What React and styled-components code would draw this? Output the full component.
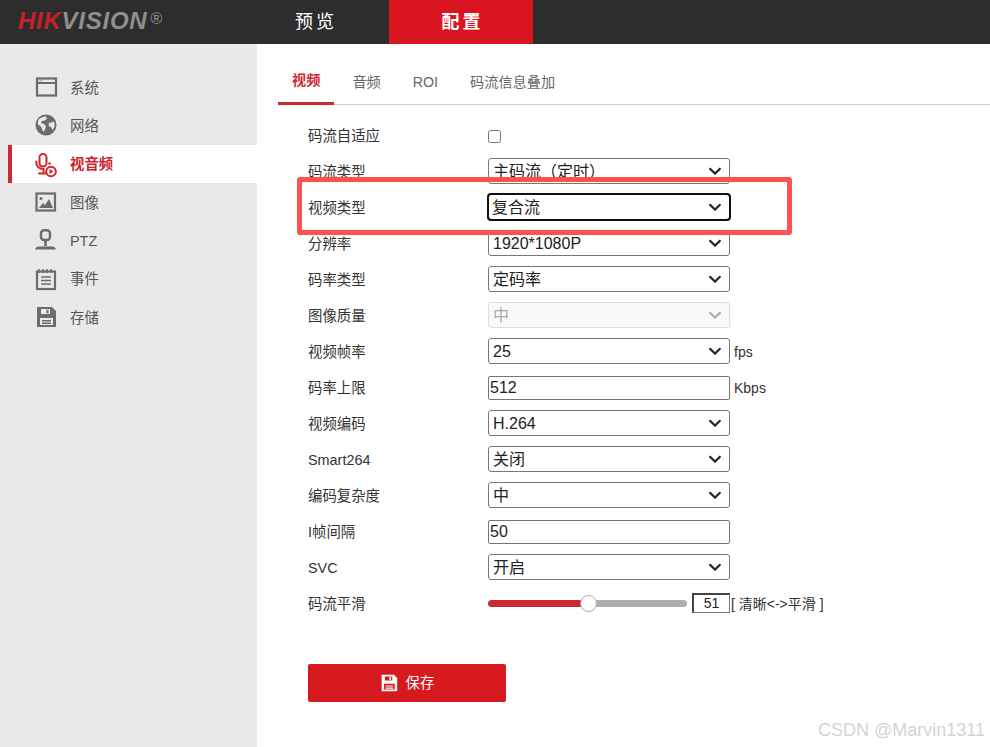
import React from "react";
import styled, { createGlobalStyle } from "styled-components";

const FONT = `"Liberation Sans", "Noto Sans CJK SC", sans-serif`;

const chevron = (color) =>
  `url("data:image/svg+xml,%3Csvg xmlns='http://www.w3.org/2000/svg' width='14' height='8' viewBox='0 0 14 8'%3E%3Cpath d='M1.500 1.200L7 6.500l5.500-5.300' fill='none' stroke='${color}' stroke-width='2.200'/%3E%3C/svg%3E")`;

const isLatin = (s) => /^[\x00-\x7f]+$/.test(s);

const GlobalStyle = createGlobalStyle`
  html, body {
    margin: 0;
    padding: 0;
    background: #fff;
    font-family: ${FONT};
  }
`;

const Page = styled.div`
  position: relative;
  width: 990px;
  height: 747px;
  overflow: hidden;
`;

const Header = styled.header`
  display: flex;
  height: 44px;
  background: #2d2d2d;
`;

const Logo = styled.div`
  display: flex;
  align-items: flex-start;
  width: 243px;
  padding: 6px 0 0 18px;
  box-sizing: border-box;
  font-size: 24px;
  line-height: 30px;
  font-weight: bold;
  font-style: italic;
  letter-spacing: 0.75px;
  color: #8f8f8f;
  span {
    color: #c8202a;
  }
  sup {
    margin: 4px 0 0 3px;
    font-size: 16px;
    line-height: 18px;
    font-style: normal;
    font-weight: normal;
    letter-spacing: 0;
  }
`;

const HeadTab = styled.div`
  display: flex;
  align-items: center;
  justify-content: center;
  width: ${(p) => (p.$active ? "144px" : "146px")};
  padding-left: ${(p) => (p.$active ? "3px" : "0")};
  padding-bottom: 4px;
  box-sizing: border-box;
  font-size: 18px;
  font-weight: ${(p) => (p.$active ? "bold" : "normal")};
  letter-spacing: 3px;
  color: #fff;
  background: ${(p) => (p.$active ? "#d9161f" : "transparent")};
`;

const Body = styled.div`
  display: flex;
  height: 703px;
`;

const Sidebar = styled.nav`
  width: 257px;
  padding-top: 24px;
  box-sizing: border-box;
  background: #e9e9e9;
`;

const NavItem = styled.div`
  display: flex;
  align-items: center;
  gap: 13px;
  height: 38.33px;
  margin-left: 8px;
  padding-left: ${(p) => (p.$active ? "23px" : "27px")};
  border-left: ${(p) => (p.$active ? "4px solid #cc2a33" : "none")};
  background: ${(p) => (p.$active ? "#fff" : "transparent")};
  color: ${(p) => (p.$active ? "#cf222c" : "#555")};
  font-size: 14.4px;
  font-weight: ${(p) => (p.$active ? "bold" : "normal")};
  svg {
    flex: none;
    width: 22px;
    height: 22px;
    overflow: visible;
    color: ${(p) => (p.$active ? "#d0252f" : "#6c6c6c")};
  }
`;

const NavText = styled.span`
  margin-top: ${(p) => (p.$latin ? "1px" : "-2px")};
`;

const Main = styled.main`
  flex: 1;
  padding-top: 16px;
`;

const Tabs = styled.div`
  display: flex;
  gap: 4px;
  height: 44px;
  margin-left: 21px;
  border-bottom: 1px solid #ccc;
`;

const Tab = styled.div`
  padding: ${(p) => (p.$active ? "12px 14px 0" : "14px 14px 0")};
  margin-bottom: ${(p) => (p.$active ? "-1px" : "0")};
  font-size: 14.2px;
  line-height: 16px;
  font-weight: ${(p) => (p.$active ? "bold" : "normal")};
  color: ${(p) => (p.$active ? "#cc2a33" : "#666")};
  border-bottom: ${(p) => (p.$active ? "3px solid #cc2a33" : "none")};
`;

const Form = styled.div`
  padding: 13px 0 0 51px;
`;

const Row = styled.div`
  display: flex;
  align-items: center;
  height: 36px;
`;

const Label = styled.div`
  width: 180px;
  padding-bottom: ${(p) => (p.$latin ? "1px" : "3px")};
  font-size: 14.4px;
  color: #333;
`;

const Select = styled.select`
  appearance: none;
  width: 242px;
  height: 26px;
  padding: 0 0 0 ${(p) => (p.$focused ? "3px" : "4px")};
  margin: -2px 0 0;
  box-sizing: border-box;
  font-family: ${FONT};
  font-size: 16px;
  opacity: 1;
  color: ${(p) => (p.disabled ? "#aaa" : "#222")};
  background: ${(p) => (p.disabled ? "#f9f9f9" : "#fff")}
    ${(p) => chevron(p.disabled ? "%23aaa" : "%23222")} no-repeat right 7px center;
  border: 1px solid ${(p) => (p.disabled ? "#ddd" : "#767676")};
  border-radius: 3px;
  outline: ${(p) => (p.$focused ? "2px solid #111" : "none")};
  outline-offset: -1px;
`;

const TextInput = styled.input`
  width: 242px;
  height: 24px;
  padding: 0 1px;
  margin: -1px 0 0;
  box-sizing: border-box;
  font-family: ${FONT};
  font-size: 16px;
  color: #222;
  border: 1px solid #767676;
  border-radius: 2px;
  outline: none;
`;

const Check = styled.input`
  width: 13px;
  height: 13px;
  margin: 0;
`;

const Unit = styled.span`
  margin-left: 4px;
  font-size: 14px;
  color: #333;
`;

const Slider = styled.input`
  appearance: none;
  width: 199px;
  height: 16px;
  margin: -1px 0 0;
  background: transparent;
  &::-webkit-slider-runnable-track {
    height: 7px;
    border-radius: 4px;
    background: linear-gradient(
      to right,
      #cc2a33 ${(p) => p.$fill}%,
      #adadad ${(p) => p.$fill}%
    );
  }
  &::-webkit-slider-thumb {
    appearance: none;
    width: 17px;
    height: 17px;
    margin-top: -5px;
    border-radius: 50%;
    box-sizing: border-box;
    border: 1px solid #aaa;
    background: #fff;
  }
`;

const SliderValue = styled.input`
  width: 38px;
  height: 20px;
  margin: -3px 0 0 5px;
  padding: 0;
  box-sizing: border-box;
  font-family: ${FONT};
  font-size: 14px;
  text-align: center;
  color: #222;
  border: 1px solid #767676;
  border-top: 2px solid #444;
  border-left: 2px solid #444;
  outline: none;
`;

const Hint = styled.span`
  margin-left: 1px;
  padding-bottom: 2px;
  font-size: 14px;
  color: #333;
`;

const SaveButton = styled.button`
  display: flex;
  align-items: center;
  justify-content: center;
  gap: 8px;
  width: 198px;
  height: 38px;
  margin-top: 42px;
  padding: 0;
  border: none;
  border-radius: 2px;
  background: #d71920;
  color: #fff;
  font-family: ${FONT};
  font-size: 14.4px;
  svg {
    width: 18px;
    height: 18px;
  }
`;

const SaveText = styled.span`
  padding-bottom: 4px;
`;

const Annotation = styled.div`
  position: absolute;
  left: 297px;
  top: 177px;
  width: 495px;
  height: 58px;
  box-sizing: border-box;
  border: 5.5px solid #fc5350;
  border-radius: 3px;
`;

const Watermark = styled.div`
  position: absolute;
  right: 5px;
  top: 719px;
  font-size: 18px;
  line-height: 22px;
  color: #d4d4d4;
`;

const WindowIcon = () => (
  <svg viewBox="0 0 22 22" fill="none" stroke="currentColor">
    <rect x="2" y="2.500" width="19" height="17" strokeWidth="2.200" />
    <path d="M1 7h20" strokeWidth="2" />
    <path d="M4.500 4.800h4" strokeWidth="1" strokeDasharray="1 1" />
  </svg>
);

const GlobeIcon = () => (
  <svg viewBox="0 0 22 22">
    <circle cx="11" cy="11" r="10.500" fill="currentColor" />
    <path
      d="M5 4.500c2-1.500 4-2 6-2l1 2-2 2-3 .5-1 2 3 1 2 2.500-1 3-1.500 2.500-1.500-3-1-2.500-3-2c-.5-2.500 0-4.500 1.500-6zM14 9l5-1.500c.8 2 .8 4 .3 6l-1.800 2.500-1.500-3-2.500-1z"
      fill="#e9e9e9"
    />
  </svg>
);

const MicIcon = () => (
  <svg viewBox="0 0 22 22" fill="none" stroke="currentColor" strokeWidth="2">
    <rect x="4.500" y="1" width="7" height="12.500" rx="3.500" />
    <path d="M1.200 8.500c0 4.500 2.800 7.500 7.300 7.500v4" strokeLinecap="round" />
    <path d="M4 20.500h6" strokeLinecap="round" />
    <circle cx="16" cy="18.500" r="4.800" />
    <path d="M14.500 16l4 2.500-4 2.500z" fill="currentColor" stroke="none" />
    <circle cx="14.500" cy="10.500" r="1.300" fill="currentColor" stroke="none" />
  </svg>
);

const ImageIcon = () => (
  <svg viewBox="0 0 22 22" fill="none" stroke="currentColor">
    <rect x="1.500" y="2.500" width="18.500" height="17" strokeWidth="2.200" />
    <circle cx="6" cy="7.500" r="1.500" fill="currentColor" stroke="none" />
    <path d="M4 17l4-5 2 2 4-6 4 9z" fill="currentColor" stroke="none" />
  </svg>
);

const PtzIcon = () => (
  <svg viewBox="0 0 22 22" fill="none" stroke="currentColor">
    <rect x="6" y="1.200" width="9" height="9.800" rx="3" strokeWidth="2.400" />
    <path d="M10.500 12v5" strokeWidth="2.600" />
    <path d="M0 20.500c.5-2 2-3 4-3h13c2 0 3.500 1 4 3z" fill="currentColor" stroke="none" />
  </svg>
);

const EventIcon = () => (
  <svg viewBox="0 0 22 22" fill="none" stroke="currentColor">
    <rect x="2" y="3.500" width="18" height="17.500" strokeWidth="2.200" />
    <path d="M4 1v4M8 1v4M12 1v4M16 1v4" strokeWidth="1.600" />
    <path d="M6 9h10M6 12.500h10M6 16h10" strokeWidth="1.600" />
  </svg>
);

const SaveIcon = () => (
  <svg viewBox="0 0 22 22">
    <path
      fillRule="evenodd"
      fill="currentColor"
      d="M2 1h15l4 4v16H2zM6 3v5h9V3zM5 12v7h13v-7z"
    />
    <path fill="currentColor" d="M11.500 3.800h2v3.400h-2zM7 14h9v1.400H7zM7 16.500h9v1.400H7z" />
  </svg>
);

const navItems = [
  { label: "系统", Icon: WindowIcon },
  { label: "网络", Icon: GlobeIcon },
  { label: "视音频", Icon: MicIcon, active: true },
  { label: "图像", Icon: ImageIcon },
  { label: "PTZ", Icon: PtzIcon },
  { label: "事件", Icon: EventIcon },
  { label: "存储", Icon: SaveIcon },
];

const tabs = ["视频", "音频", "ROI", "码流信息叠加"];

const SelectRow = ({ label, value, unit, focused, disabled }) => (
  <Row>
    <Label $latin={isLatin(label)}>{label}</Label>
    <Select defaultValue={value} $focused={focused} disabled={disabled}>
      <option>{value}</option>
    </Select>
    {unit && <Unit>{unit}</Unit>}
  </Row>
);

const InputRow = ({ label, value, unit }) => (
  <Row>
    <Label>{label}</Label>
    <TextInput defaultValue={value} />
    {unit && <Unit>{unit}</Unit>}
  </Row>
);

export default function App() {
  return (
    <Page>
      <GlobalStyle />
      <Header>
        <Logo>
          <span>HIK</span>VISION<sup>®</sup>
        </Logo>
        <HeadTab>预览</HeadTab>
        <HeadTab $active>配置</HeadTab>
      </Header>
      <Body>
        <Sidebar>
          {navItems.map(({ label, Icon, active }) => (
            <NavItem key={label} $active={active}>
              <Icon />
              <NavText $latin={isLatin(label)}>{label}</NavText>
            </NavItem>
          ))}
        </Sidebar>
        <Main>
          <Tabs>
            {tabs.map((t, i) => (
              <Tab key={t} $active={i === 0}>
                {t}
              </Tab>
            ))}
          </Tabs>
          <Form>
            <Row>
              <Label>码流自适应</Label>
              <Check type="checkbox" />
            </Row>
            <SelectRow label="码流类型" value="主码流（定时）" />
            <SelectRow label="视频类型" value="复合流" focused />
            <SelectRow label="分辨率" value="1920*1080P" />
            <SelectRow label="码率类型" value="定码率" />
            <SelectRow label="图像质量" value="中" disabled />
            <SelectRow label="视频帧率" value="25" unit="fps" />
            <InputRow label="码率上限" value="512" unit="Kbps" />
            <SelectRow label="视频编码" value="H.264" />
            <SelectRow label="Smart264" value="关闭" />
            <SelectRow label="编码复杂度" value="中" />
            <InputRow label="I帧间隔" value="50" />
            <SelectRow label="SVC" value="开启" />
            <Row>
              <Label>码流平滑</Label>
              <Slider type="range" min="1" max="100" defaultValue="51" $fill={50} />
              <SliderValue defaultValue="51" />
              <Hint>[ 清晰&lt;-&gt;平滑 ]</Hint>
            </Row>
            <SaveButton>
              <SaveIcon />
              <SaveText>保存</SaveText>
            </SaveButton>
          </Form>
        </Main>
      </Body>
      <Annotation />
      <Watermark>CSDN @Marvin1311</Watermark>
    </Page>
  );
}
